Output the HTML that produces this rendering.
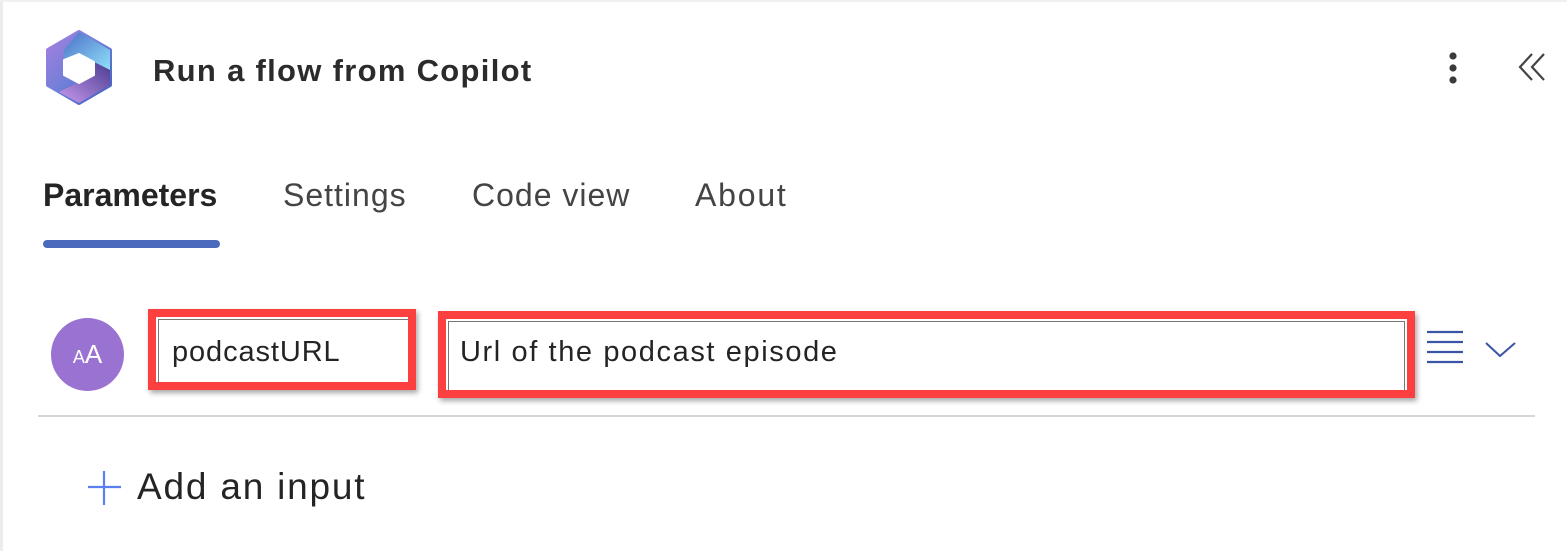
<!DOCTYPE html>
<html><head><style>
body{margin:0;width:1567px;height:551px;background:#fff;position:relative;overflow:hidden;font-family:"Liberation Sans",sans-serif;color:#242424}
.a{position:absolute;white-space:nowrap}
</style></head><body>
<div class="a" style="left:0;top:0;width:3px;height:551px;background:#ececec"></div>
<div class="a" style="left:0;top:0;width:1567px;height:2px;background:#f0f0f0"></div>
<svg class="a" style="left:44px;top:30px" width="70" height="75" viewBox="0 0 70 75">
<defs><linearGradient id="g1" x1="0" y1="0" x2="1" y2="1"><stop offset="0" stop-color="#a77fe0"/><stop offset="0.5" stop-color="#6f7fd8"/><stop offset="1" stop-color="#3f5fc0"/></linearGradient>
<linearGradient id="g2" x1="0" y1="0" x2="1" y2="1"><stop offset="0" stop-color="#4b6fc8"/><stop offset="1" stop-color="#8ee0f8"/></linearGradient>
<linearGradient id="g3" x1="0" y1="1" x2="1" y2="0"><stop offset="0" stop-color="#c99bef"/><stop offset="1" stop-color="#4a3b90"/></linearGradient></defs>
<path d="M35 2 L66 20 L66 55 L35 73 L4 55 L4 20 Z" fill="url(#g1)" stroke="url(#g1)" stroke-width="4" stroke-linejoin="round"/>
<path d="M35 2 L66 20 L66 40 L50 32 L35 24 L20 30 L20 20 Z" fill="url(#g2)"/>
<path d="M66 40 L66 55 L35 73 L15 62 L35 52 L50 45 L50 32 Z" fill="url(#g3)"/>
<path d="M35 24 L50 32 L50 45 L35 53 L20 45 L20 30 Z" fill="#fff" stroke="#fff" stroke-width="2" stroke-linejoin="round"/>
</svg>
<div class="a" style="left:153px;top:53px;font-size:31px;font-weight:bold;color:#2b2b2b;letter-spacing:1.3px">Run a flow from Copilot</div>
<svg class="a" style="left:1445px;top:50px" width="16" height="36"><circle cx="8" cy="6" r="3.6" fill="#3a3a3a"/><circle cx="8" cy="18" r="3.6" fill="#3a3a3a"/><circle cx="8" cy="30" r="3.6" fill="#3a3a3a"/></svg>
<svg class="a" style="left:1518px;top:52px" width="32" height="32"><path d="M14 2 L2 15 L14 28 M26 2 L14 15 L26 28" fill="none" stroke="#444" stroke-width="2.2"/></svg>
<div class="a" style="left:43px;top:177px;font-size:32px;font-weight:bold;color:#242424">Parameters</div>
<div class="a" style="left:283px;top:177px;font-size:32px;color:#444;letter-spacing:1px">Settings</div>
<div class="a" style="left:472px;top:177px;font-size:32px;color:#444;letter-spacing:1px">Code view</div>
<div class="a" style="left:695px;top:177px;font-size:32px;color:#444;letter-spacing:1.8px">About</div>
<div class="a" style="left:43px;top:240px;width:177px;height:8px;border-radius:4px;background:#4a6bbd"></div>
<div class="a" style="left:51px;top:318px;width:73px;height:73px;border-radius:50%;background:#9a72d1;color:#fff;font-size:26px;text-align:center;line-height:73px"><span style="font-size:18px">A</span>A</div>
<div class="a" style="left:148px;top:309px;width:252px;height:65px;border:8px solid #fc4040;box-shadow:2px 3px 5px rgba(0,0,0,0.35)"><div style="position:absolute;left:2px;top:2px;right:0;bottom:0;border:1px solid #777;border-right:none;border-bottom:none"></div></div>
<div class="a" style="left:172px;top:336px;font-size:29px;color:#242424;letter-spacing:0.9px">podcastURL</div>
<div class="a" style="left:438px;top:311px;width:961px;height:71px;border:8px solid #fc4040;box-shadow:2px 3px 5px rgba(0,0,0,0.35)"><div style="position:absolute;left:2px;top:2px;right:2px;bottom:0;border:1px solid #777;border-bottom:none"></div></div>
<div class="a" style="left:460px;top:336px;font-size:29px;color:#242424;letter-spacing:1.6px">Url of the podcast episode</div>
<svg class="a" style="left:1427px;top:330px" width="38" height="40"><path d="M0 2H36M0 12H36M0 22H36M0 32H36" stroke="#3b55a5" stroke-width="2.2"/></svg>
<svg class="a" style="left:1484px;top:340px" width="34" height="20"><path d="M2 3 L16 16 L31 3" fill="none" stroke="#3b55a5" stroke-width="2"/></svg>
<div class="a" style="left:38px;top:415px;width:1497px;height:2px;background:#d6d6d6"></div>
<svg class="a" style="left:87px;top:470px" width="36" height="36"><path d="M17 1V35M1 17H34" stroke="#5b7ff0" stroke-width="2.2"/></svg>
<div class="a" style="left:137px;top:466px;font-size:37px;color:#242424;letter-spacing:1.8px">Add an input</div>
</body></html>
